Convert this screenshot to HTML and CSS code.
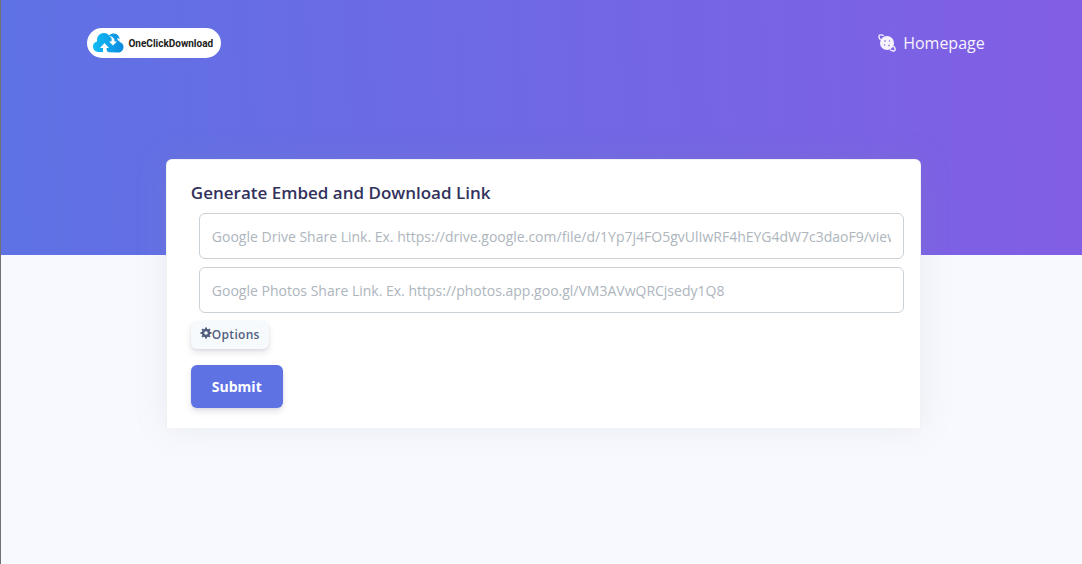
FILE: index.html
```html
<!DOCTYPE html>
<html lang="en">
<head>
    <meta charset="UTF-8">
    <meta name="viewport" content="width=device-width, initial-scale=1.0">
    <title>OneClickDownload</title>
    <link rel="stylesheet" href="styles.css">
</head>
<body>
    <header class="header">
        <nav class="navbar">
            <a class="brand" href="#">
                <svg class="brand-icon" viewBox="0 0 32 22" aria-hidden="true">
                    <defs>
                        <linearGradient id="cloud" x1="0" y1="0" x2="1" y2="0">
                            <stop offset="0" stop-color="#12bdf5"/>
                            <stop offset="1" stop-color="#0b8ae0"/>
                        </linearGradient>
                    </defs>
                    <path fill="url(#cloud)" d="M7 20C3 20 1 17.500 1 14.500C1 12 2.500 10 5 9.500C4.500 4 8 1 12 1C14.500 1 16 2 17 3.500C20 .5 25 1 26.500 4C27.800 6 28 8 27.500 10C30 10.500 31.500 12.500 31.500 15C31.500 18.500 29 20.500 26 20.500Z"/>
                    <path fill="#fff" d="M17 4L19.500 6V9.500H17L21 13.500L25 9.500H22.500V7.500C21.500 5.500 19.500 4.200 17 4ZM11 21V16H8L12.500 11L17 16H14.500C14.500 18 15.200 20 17 21Z"/>
                    <path fill="#fff" d="M25 6L28 7L27.500 9.500L26 8.500Z"/>
                </svg>
                <span>OneClickDownload</span>
            </a>
            <a class="nav-link" href="#">
                <svg class="nav-icon" viewBox="0 0 18 18" aria-hidden="true">
                    <circle cx="9" cy="9" r="7" fill="currentColor"/>
                    <path d="M6 1.500C3 .3 .5 .5 1 3C1.200 4 1.800 5 2.500 6M15.500 12C17.500 14.500 18 17 15.500 17C14.500 17 13 16.500 12 15.800" fill="none" stroke="currentColor" stroke-width="1.300"/>
                    <g fill="#7c61e3">
                        <circle cx="7" cy="7" r=".8"/>
                        <circle cx="11.500" cy="7" r=".7"/>
                        <circle cx="6.500" cy="11" r=".7"/>
                        <circle cx="11" cy="11.500" r=".8"/>
                    </g>
                </svg>
                <span>Homepage</span>
            </a>
        </nav>
    </header>
    <main class="card">
        <h1>Generate Embed and Download Link</h1>
        <form>
            <div class="fields">
                <input class="form-control" type="text" aria-label="Google Drive share link" placeholder="Google Drive Share Link. Ex. https://drive.google.com/file/d/1Yp7j4FO5gvUlIwRF4hEYG4dW7c3daoF9/view?usp=sharing">
                <input class="form-control" type="text" aria-label="Google Photos share link" placeholder="Google Photos Share Link. Ex. https://photos.app.goo.gl/VM3AVwQRCjsedy1Q8">
            </div>
            <button class="btn btn-options" type="button">
                <svg class="gear" viewBox="0 0 12 12" aria-hidden="true">
                    <circle cx="6" cy="6" r="3" fill="none" stroke="currentColor" stroke-width="2.400"/>
                    <path d="M6 .5V3M6 9V11.500M.5 6H3M9 6H11.500M2.100 2.100L3.800 3.800M8.200 8.200L9.900 9.900M9.900 2.100L8.200 3.800M3.800 8.200L2.100 9.900" stroke="currentColor" stroke-width="2"/>
                </svg>
                <span>Options</span>
            </button>
            <button class="btn btn-submit" type="submit">Submit</button>
        </form>
    </main>
</body>
</html>
```
FILE: styles.css
```css
* {
    box-sizing: border-box;
}
body {
    margin: 0;
    min-height: 100vh;
    font-family: "Open Sans", sans-serif;
    background-color: #f8f9fe;
    border-left: 1px solid #717171;
}
.header {
    height: 255px;
    padding: 28px 9% 0 8%;
    background: linear-gradient(87deg, #5e72e4, #825ee4);
}
.navbar {
    display: flex;
    align-items: center;
    justify-content: space-between;
}
.brand {
    display: flex;
    align-items: center;
    gap: 4px;
    height: 30px;
    padding: 0 8px 0 5px;
    border-radius: 15px;
    background-color: #fff;
    color: #222;
    font-family: Roboto, sans-serif;
    font-size: 10px;
    font-weight: 700;
    text-decoration: none;
}
.brand-icon {
    width: 32px;
    height: 22px;
}
.nav-link {
    display: flex;
    align-items: center;
    gap: 7px;
    color: #f6f3fe;
    font-size: 16px;
    text-decoration: none;
}
.nav-icon {
    width: 18px;
    height: 18px;
}
.card {
    width: 69.9%;
    margin: -96px auto 0 15.25%;
    padding: 20px 24px;
    border: 1px solid rgba(0, 0, 0, 0.05);
    border-bottom: none;
    border-radius: 6px 6px 0 0;
    background-color: #fff;
    box-shadow: 0 0 32px rgba(136, 152, 170, 0.15);
    position: relative;
}
.card h1 {
    margin: 0 0 8px;
    color: #32325d;
    font-size: 17px;
    font-weight: 600;
    line-height: 25px;
}
.fields {
    display: grid;
    gap: 8px;
    margin: 0 -8px 8px 8px;
}
.form-control {
    width: 100%;
    height: 46px;
    padding: 10px 12px;
    border: 1px solid #cad1d7;
    border-radius: 6px;
    background-color: #fff;
    color: #8898aa;
    font-family: inherit;
    font-size: 14px;
}
.form-control::placeholder {
    color: #adb5bd;
}
.btn {
    display: flex;
    align-items: center;
    border: none;
    font-family: inherit;
    font-weight: 600;
    cursor: pointer;
    box-shadow: 0 4px 6px rgba(50, 50, 93, 0.11), 0 1px 3px rgba(0, 0, 0, 0.08);
}
.btn-options {
    height: 28px;
    margin-bottom: 16px;
    padding: 0 9px 2px;
    border-radius: 6px;
    background-color: #f7fafc;
    color: #525f7f;
    font-size: 12px;
    letter-spacing: 0.025em;
}
.gear {
    width: 12px;
    height: 12px;
    margin-bottom: 3px;
}
.btn-submit {
    height: 43px;
    padding: 0 21px;
    border-radius: 6px;
    background-color: #5e72e4;
    color: #fff;
    font-size: 14px;
    font-weight: 700;
}
```
